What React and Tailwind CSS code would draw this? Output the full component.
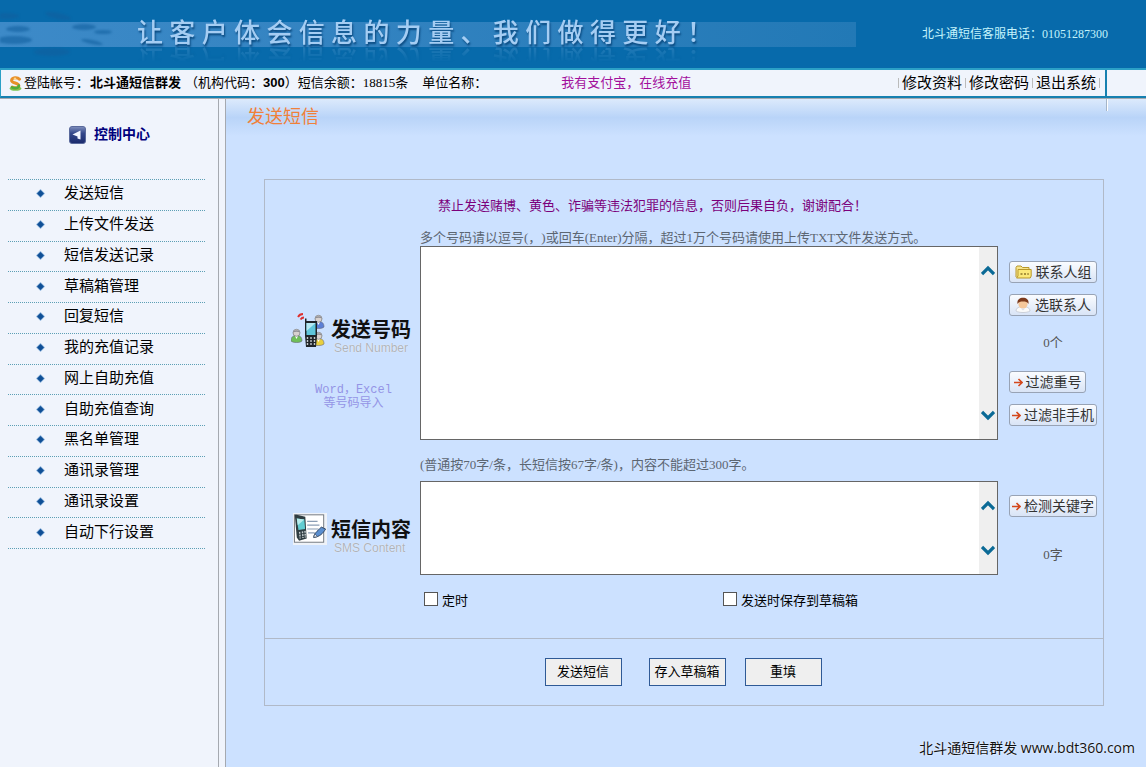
import { useState } from 'react';

// ── Data ─────────────────────────────────────────────────────────────────────

const menu = [
  '发送短信', '上传文件发送', '短信发送记录', '草稿箱管理',
  '回复短信', '我的充值记录', '网上自助充值', '自助充值查询',
  '黑名单管理', '通讯录管理', '通讯录设置', '自动下行设置',
];

const accountLinks = ['修改资料', '修改密码', '退出系统'];

// ── Icons ────────────────────────────────────────────────────────────────────

const LogoIcon = () => (
  <svg width="13" height="15" viewBox="0 0 13 15" className="shrink-0" aria-hidden="true">
    <ellipse cx="6.5" cy="12.6" rx="6" ry="2.2" fill="#7cc653" />
    <path d="M10.5 3.2C8.5 1 3 1.2 2.6 4.2c-.4 3 7 2.6 7.2 5.4.2 2.6-4 3-6.6 1.4" fill="none" stroke="#e8912a" strokeWidth="3" strokeLinecap="round" />
    <path d="M9.8 9.6c.2 2.6-4 3.2-6.8 1.8" fill="none" stroke="#4fae3c" strokeWidth="2.6" strokeLinecap="round" />
    <circle cx="6" cy="2.6" r="1.2" fill="#fbd58a" />
  </svg>
);

const PanelIcon = () => (
  <svg width="17" height="18" viewBox="0 0 17 18" className="shrink-0" aria-hidden="true">
    <defs>
      <linearGradient id="panel" x1="0" y1="0" x2="0" y2="1">
        <stop offset="0" stopColor="#8090bd" />
        <stop offset="0.4" stopColor="#34488b" />
        <stop offset="1" stopColor="#1a2a6c" />
      </linearGradient>
    </defs>
    <rect x="0.5" y="0.5" width="16" height="17" rx="2.5" fill="url(#panel)" stroke="#5a6a9c" />
    <path d="M3.5 8.5 11.500 4.500v9l-3-1V10.500z" fill="#f3f6ff" />
  </svg>
);

const Diamond = () => (
  <svg width="9" height="9" viewBox="0 0 9 9" className="shrink-0" aria-hidden="true">
    <path d="M4.5 0 9 4.5 4.5 9 0 4.5z" fill="#8fb4dc" />
    <path d="M4.5 1 8 4.5 4.5 8 1 4.5z" fill="#0f4f96" />
  </svg>
);

const Chevron = ({ down }) => (
  <svg width="14" height="11" viewBox="0 0 14 11" className={down ? 'rotate-180' : ''} aria-hidden="true">
    <path d="M1 9 7 3l6 6" fill="none" stroke="#0b6a96" strokeWidth="3.2" />
  </svg>
);

const FolderIcon = () => (
  <svg width="17" height="14" viewBox="0 0 17 14" aria-hidden="true">
    <path d="M1 12V2.5L2 1h4l1.5 1.5H14V5" fill="#f7e58c" stroke="#b8972a" />
    <path d="M3 4.5h13.2V11l-1 2H1.5L3 11z" fill="#fbe879" stroke="#b8972a" />
    <path d="M5.5 8h2v2h-2zM9 8h2v2H9zM12.3 8h1.5v2h-1.5z" fill="#a8923c" />
  </svg>
);

const PersonIcon = () => (
  <svg width="16" height="16" viewBox="0 0 16 16" aria-hidden="true">
    <path d="M1 14c0-3 3-4.5 7-4.5s7 1.5 7 4.5c-3 2-11 2-14 0z" fill="#fafafa" stroke="#c3c8d2" strokeWidth="0.8" />
    <circle cx="8" cy="7" r="4.6" fill="#f5c79a" />
    <path d="M2.5 7C1.8 2.5 5 .8 8 .8s6.3 1.7 5.5 6.2C12.5 5 10.5 4.6 8 4.6S3.5 5 2.5 7z" fill="#7c3a1c" />
    <path d="m6 11.5 2 2 2-2z" fill="#d9dde6" />
  </svg>
);

const ArrowIcon = () => (
  <svg width="9" height="9" viewBox="0 0 9 9" aria-hidden="true">
    <path d="M0 4.5h7.5M4.5 1 8 4.5 4.5 8" fill="none" stroke="#d4481c" strokeWidth="1.6" />
  </svg>
);

const Buddy = ({ x, y, fill }) => (
  <g transform={`translate(${x} ${y})`}>
    <path d="M0 12c0-4 2-5.5 5.5-5.5S11 8 11 12c-2 2-9 2-11 0z" fill={fill} stroke="#667" strokeWidth="0.6" />
    <path d="m4 7 1.5 3L7 7z" fill="#fff" />
    <circle cx="5.5" cy="3.8" r="3.5" fill="#d9d2cf" stroke="#777" strokeWidth="0.7" />
    <path d="M2 3.5C2 .5 9 .5 9 3.5 7 2.5 4 2.5 2 3.5z" fill="#8f8f95" />
  </g>
);

const SendNumberIcon = () => (
  <svg width="36" height="36" viewBox="0 0 36 36" className="shrink-0" aria-hidden="true">
    <path d="M7 5c1-2 3-3 5-3M9.500 7.500c.8-1.200 2-2 3.500-2" fill="none" stroke="#dd3030" strokeWidth="1.8" />
    <Buddy x={22} y={3} fill="#5c7fd6" />
    <Buddy x={0} y={17} fill="#6fbf58" />
    <Buddy x={22} y={20} fill="#e8cf3e" />
    <path d="M14 6.5h1.5V9H26v15l-1 11H15l-1-11z" fill="#1f2429" />
    <rect x="15.5" y="11" width="9" height="12" fill="#5fc6dc" />
    <path d="M15.5 11h9l-9 8z" fill="#b5e8f2" />
    <path d="M16.5 25v8M20 25v8M23.5 25v8" stroke="#c2c8cc" strokeWidth="1.4" strokeDasharray="2 1" />
  </svg>
);

const SmsIcon = () => (
  <svg width="34" height="34" viewBox="0 0 36 34" className="shrink-0" aria-hidden="true">
    <rect width="36" height="34" fill="#eef2f8" />
    <rect x="1.5" y="2" width="31" height="29" fill="#fff" stroke="#70757c" />
    <path d="M15 9h11M15 13h13M15 17h12M16 21h7" stroke="#8a9db5" strokeWidth="1.3" />
    <path d="M2 3.5V2h2l9 2 1.5 23-8 2.5L4 26z" fill="#2f3d42" />
    <path d="m4 6 8 1 .8 10-7 1z" fill="#62cdd2" />
    <path d="m4 6 8 1-7 6z" fill="#b7ecec" />
    <path d="m7 20 .6 7M10 19.5l.6 7M12.7 19l.4 7" stroke="#c5cdd0" strokeWidth="1.5" strokeDasharray="2 1" />
    <path d="M22 26c0-4 3-6 8-11l4.5 2c-3 5-6 8-12.5 9z" fill="#5b8fd0" stroke="#34465e" />
    <path d="m22 26 1-4 3 3z" fill="#e8ecf2" stroke="#34465e" strokeWidth="0.7" />
  </svg>
);

// ── Parts ────────────────────────────────────────────────────────────────────

const SideButton = ({ icon, narrow, children }) => (
  <button
    type="button"
    className={`flex h-[22px] items-center justify-center rounded-[3px] border border-[#98a3b5] bg-linear-to-b from-[#fafcff] to-[#d9e4f6] font-['Liberation_Sans','Noto_Sans_CJK_SC',sans-serif] text-[14px] leading-none whitespace-nowrap text-[#333] ${narrow ? 'w-[77px]' : 'w-[88px]'} ${icon === 'arrow' ? 'gap-[3px]' : 'gap-1'}`}
  >
    {icon === 'folder' && <FolderIcon />}
    {icon === 'person' && <PersonIcon />}
    {icon === 'arrow' && <ArrowIcon />}
    {children}
  </button>
);

const FieldLabel = ({ htmlFor, icon, title, sub }) => (
  <label htmlFor={htmlFor} className="flex items-start gap-1">
    {icon}
    <span className="flex flex-col pt-2 whitespace-nowrap">
      <span className="text-[20px] leading-[21px] font-bold text-[#111]">{title}</span>
      <span className="pl-[3px] font-['Liberation_Sans',sans-serif] text-[12px] leading-[14px] text-[#aeb3ba] [text-shadow:0_0_1px_#fff]">{sub}</span>
    </span>
  </label>
);

const TextBox = ({ id, value, onChange, tall }) => (
  <div className={`flex border border-[#666] bg-white ${tall ? 'h-[194px]' : 'h-[94px]'}`}>
    <textarea
      id={id}
      value={value}
      onChange={(e) => onChange(e.target.value)}
      className="min-w-0 flex-1 resize-none overflow-hidden p-1 text-[13px] outline-none"
    />
    <div className="flex w-[18px] flex-col items-center justify-between bg-[#efefef] py-[18px]">
      <Chevron />
      <Chevron down />
    </div>
  </div>
);

const Check = ({ id, children }) => (
  <div className="flex items-center gap-1">
    <input id={id} type="checkbox" className="mb-1 size-[14px] appearance-none border border-[#555] bg-white checked:bg-[#2f5a96]" />
    <label htmlFor={id} className="leading-[16px]">{children}</label>
  </div>
);

const FormButton = ({ type = 'button', className = '', children }) => (
  <button type={type} className={`h-7 w-[77px] border border-[#2f5a96] bg-[#efefef] whitespace-nowrap ${className}`}>
    {children}
  </button>
);

// ── Sections ─────────────────────────────────────────────────────────────────

const Banner = () => (
  <header className="flex h-[68px] items-center justify-between bg-[#076aab] pr-[38px]">
    <div className="relative flex h-[25px] w-[856px] items-center bg-linear-to-r from-[#3d8ac8] to-[#2279b6] pl-[137px]">
      <svg className="absolute -top-3 left-0 blur-[1px]" width="130" height="52" viewBox="0 0 130 52" aria-hidden="true">
        <g fill="#12609f" opacity="0.6">
          <ellipse cx="5" cy="6" rx="14" ry="3" />
          <ellipse cx="58" cy="6" rx="13" ry="3" transform="rotate(12 58 6)" />
          <ellipse cx="14" cy="30" rx="18" ry="4" />
          <ellipse cx="18" cy="19" rx="12" ry="3" />
          <ellipse cx="84" cy="17" rx="12" ry="3" />
          <ellipse cx="103" cy="22" rx="9" ry="2" />
          <ellipse cx="92" cy="32" rx="11" ry="2" transform="rotate(12 92 32)" />
          <ellipse cx="52" cy="42" rx="18" ry="4" />
        </g>
      </svg>
      <h1 className="w-[576px] text-[26px] leading-[26px] font-medium text-[#a5cdf3] [text-align-last:justify] [text-shadow:1px_2px_2px_#0a4a80] [-webkit-box-reflect:below_-2px_linear-gradient(transparent_35%,rgba(255,255,255,0.2))]">
        让客户体会信息的力量、我们做得更好！
      </h1>
    </div>
    <p className="text-[12px] whitespace-nowrap text-[#c4f4fc]">北斗通短信客服电话：01051287300</p>
  </header>
);

const StatusBar = () => (
  <div className="flex h-[30px] border-y-2 border-l border-t-[#2ba0c6] border-b-[#1680b0] border-l-[#2ba0c6] bg-[#f0f4fc]">
    <div className="flex flex-1 items-center border-r-2 border-[#1680b0] pr-[5px] pl-2 whitespace-nowrap">
      <LogoIcon />
      <span className="ml-[2px]">登陆帐号：</span>
      <b className="ml-px font-['Liberation_Sans','Noto_Sans_CJK_SC',sans-serif]">北斗通短信群发</b>
      <span className="ml-1">
        （机构代码：<b className="font-['Liberation_Sans',sans-serif]">300</b>）
      </span>
      <span>短信余额：18815条</span>
      <span className="ml-[14px]">单位名称：</span>
      <a href="#recharge" className="ml-[74px] text-[#a3109c]">我有支付宝，在线充值</a>
      <nav className="ml-auto flex items-center gap-[3px] text-[15px]">
        <span className="h-[10px] w-px bg-[#bbb]" />
        {accountLinks.map((text) => (
          <span key={text} className="flex items-center gap-[3px]">
            <a href="#account">{text}</a>
            <span className="h-[10px] w-px bg-[#bbb]" />
          </span>
        ))}
      </nav>
    </div>
    <div className="w-[39px]" />
  </div>
);

const Sidebar = () => (
  <aside className="w-[219px] shrink-0 border-r border-[#a5a9b0] bg-[#f0f4fc] pr-[13px] pl-2">
    <h2 className="flex h-20 items-center gap-2 pb-[9px] pl-[61px] text-[14px] font-bold text-[#00007c]">
      <PanelIcon />
      控制中心
    </h2>
    {/* twelve equal rows */}
    <ul className="grid h-[370px] auto-rows-fr border-b border-dotted border-[#5d9fb5]">
      {menu.map((text) => (
        <li key={text} className="border-t border-dotted border-[#5d9fb5]">
          <a href="#menu" className="flex h-full items-center gap-[19px] pb-[2px] pl-7 text-[15px] leading-none">
            <Diamond />
            {text}
          </a>
        </li>
      ))}
    </ul>
  </aside>
);

const SmsForm = () => {
  const [numbers, setNumbers] = useState('');
  const [content, setContent] = useState('');

  return (
    <form className="border border-[#b0b9c8]" onSubmit={(e) => e.preventDefault()}>
      <div className="grid grid-cols-[155px_1fr_105px] pt-4">
        <p className="col-span-2 col-start-2 pl-[18px] leading-[20px] text-[#7b007b]">
          禁止发送赌博、黄色、诈骗等违法犯罪的信息，否则后果自负，谢谢配合！
        </p>
        <p className="col-span-2 col-start-2 pt-[14px] leading-[16px] text-[#5c6672]">
          多个号码请以逗号(，)或回车(Enter)分隔，超过1万个号码请使用上传TXT文件发送方式。
        </p>

        <div className="pt-[66px] pl-[26px]">
          <FieldLabel htmlFor="numbers" icon={<SendNumberIcon />} title="发送号码" sub="Send Number" />
          <a href="#import" className="mt-7 block pr-[4px] text-center font-['Liberation_Mono','Noto_Sans_CJK_SC',monospace] text-[12px] leading-[14px] text-[#9494e6]">
            Word，Excel
            <br />
            等号码导入
          </a>
        </div>
        <TextBox id="numbers" value={numbers} onChange={setNumbers} tall />
        <div className="flex flex-col gap-[11px] pt-[15px] pl-[11px]">
          <SideButton icon="folder">联系人组</SideButton>
          <SideButton icon="person">选联系人</SideButton>
          <span className="w-[88px] pt-1 pb-[6px] text-center leading-[23px] text-[#555]">0个</span>
          <SideButton icon="arrow" narrow>过滤重号</SideButton>
          <SideButton icon="arrow">过滤非手机</SideButton>
        </div>

        <p className="col-span-2 col-start-2 pt-4 pb-[7px] leading-[18px] text-[#5c6672]">
          (普通按70字/条，长短信按67字/条)，内容不能超过300字。
        </p>

        <div className="pt-[31px] pl-7">
          <FieldLabel htmlFor="content" icon={<SmsIcon />} title="短信内容" sub="SMS Content" />
        </div>
        <TextBox id="content" value={content} onChange={setContent} />
        <div className="flex flex-col gap-7 pt-[14px] pl-[11px]">
          <SideButton icon="arrow">检测关键字</SideButton>
          <span className="w-[88px] text-center leading-[20px] text-[#555]">{content.length}字</span>
        </div>

        <div className="col-start-2 grid grid-cols-[299px_1fr] pt-[17px] pb-7 pl-1">
          <Check id="timed">定时</Check>
          <Check id="draft">发送时保存到草稿箱</Check>
        </div>
      </div>
      <div className="flex justify-center border-t border-[#b0b9c8] py-[19px] pr-[2px]">
        <FormButton type="submit">发送短信</FormButton>
        <FormButton className="ml-[27px]">存入草稿箱</FormButton>
        <FormButton type="reset" className="ml-[19px]">重填</FormButton>
      </div>
    </form>
  );
};

export default function App() {
  return (
    <div className="flex min-h-screen flex-col bg-[#f0f4fc] font-['Liberation_Serif','Noto_Sans_CJK_SC',sans-serif] text-[13px] text-black [text-spacing-trim:space-all]">
      <Banner />
      <StatusBar />
      <div className="flex flex-1 gap-[6px] border-t border-[#a5a9b0]">
        <Sidebar />
        <main className="relative flex flex-1 flex-col border-l border-[#a5a9b0] bg-[#cce1ff]">
          <div className="absolute top-0 right-[38px] h-3 w-[2px] border-l border-[#a5b5c8] bg-white" />
          <div className="h-[37px] bg-linear-to-b from-[#dceafc] via-[#b9d4f8] to-[#cce1ff] pl-[21px]">
            <h2 className="text-[18px] leading-[37px] text-[#f0803a]">发送短信</h2>
          </div>
          <div className="pt-[43px] pr-[42px] pl-[38px]">
            <SmsForm />
          </div>
          <footer className="mt-auto pr-[11px] pb-2 text-right font-['Open_Sans','Noto_Sans_CJK_SC',sans-serif] text-[14px] leading-[22px] text-[#111] [text-shadow:0_0_2px_#fff]">
            北斗通短信群发 www.bdt360.com
          </footer>
        </main>
      </div>
    </div>
  );
}
